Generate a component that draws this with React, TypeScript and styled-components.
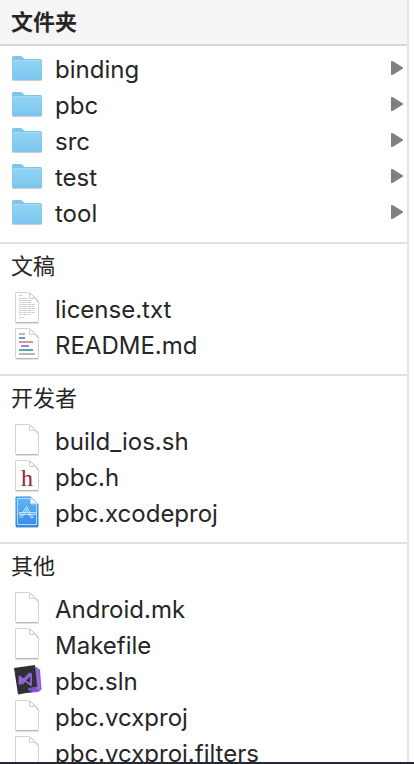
import React from 'react';
import styled, { createGlobalStyle } from 'styled-components';

const GlobalStyle = createGlobalStyle`
  * { box-sizing: border-box; }
  body {
    margin: 0;
    background: #fff;
    color: #262626;
    font-family: Inter, "Noto Sans CJK SC", sans-serif;
  }
`;

const Finder = styled.main`
  display: flex;
  height: 100vh;
  overflow: hidden;
  background: #fff;
  border-bottom: 2px solid #26282f;
`;

const Column = styled.div`
  flex: 1;
  min-width: 0;
  overflow: hidden;
`;

const Divider = styled.div`
  width: 2px;
  background: #e4e4e4;
`;

const NextColumn = styled.div`
  width: 5px;
  background: #fff;
`;

const Group = styled.section`
  padding-bottom: 10px;
  & + & { border-top: 2px solid #e2e2e2; }
`;

const GroupTitle = styled.h2<{ $pinned?: boolean }>`
  margin: 0 0 ${p => (p.$pinned ? 6 : 0)}px;
  padding: 0 11px;
  height: ${p => (p.$pinned ? 46 : 48)}px;
  line-height: 44px;
  font-size: 22px;
  font-weight: ${p => (p.$pinned ? 700 : 400)};
  background: ${p => (p.$pinned ? '#f5f5f5' : 'transparent')};
  border-bottom: ${p => (p.$pinned ? '2px solid #d6d6d6' : 'none')};
`;

const List = styled.ul`
  margin: 0;
  padding: 0;
  list-style: none;
`;

const Row = styled.button`
  display: flex;
  align-items: center;
  gap: 12px;
  width: 100%;
  height: 36px;
  padding: 0 4px 0 11px;
  border: 0;
  background: transparent;
  color: inherit;
  font: inherit;
  font-size: 24px;
  line-height: 36px;
  text-align: left;
`;

const Icon = styled.svg`
  flex: none;
  width: 32px;
  height: 36px;
`;

const Name = styled.span`
  flex: 1;
  min-width: 0;
  white-space: nowrap;
`;

const Arrow = styled.svg`
  flex: none;
  width: 12px;
  height: 36px;
`;

type Kind = 'folder' | 'blank' | 'text' | 'markdown' | 'header' | 'xcode' | 'solution';

const FolderArt = () => (
  <>
    <defs>
      <linearGradient id="folder" x1="0" y1="0" x2="0" y2="1">
        <stop offset="0" stopColor="#92d4f5" />
        <stop offset="1" stopColor="#7cc6ee" />
      </linearGradient>
    </defs>
    <path d="M1.5 28.5h29" stroke="#c9cdd0" />
    <path d="M1 27V5.500q0-1.500 1.500-1.500h7q1 0 1.800.8l1.400 1.400q.8.800 1.800.800H29.500q1.500 0 1.500 1.500V27q0 1-1 1H2q-1 0-1-1z" fill="#7fc4ea" />
    <path d="M1.500 9H30.500V26.500q0 .5-.5.500H2q-.5 0-.5-.5z" fill="url(#folder)" />
    <path d="M1.500 8.500h29" stroke="#a4dcf8" />
  </>
);

const Sheet = () => (
  <>
    <path d="M4.500 31.500h23" stroke="#e2e2e2" />
    <path d="M4.500 .5h12q2 0 3.500 1.200l5.800 5.300q1.700 1.800 1.700 4V29.500q0 1-1 1h-21q-1 0-1-1z" fill="#fff" stroke="#d2d2d2" />
    <path d="M5 30.500h22" stroke="#b5b5b5" />
    <path d="M18.500 1v5.500h5.500l3 3.500q-.4-1.800-1.800-3z" fill="#fff" stroke="#d0d0d0" strokeLinejoin="round" />
  </>
);

const TextArt = () => (
  <>
    <Sheet />
    <path
      d="M8 3.500h4M8 6.500h8M8 8.500h13M8 10.500h12M8 12.500h16M8 14.500h15M8 16.500h16M8 18.500h14M8 20.500h16M8 22.500h11M8 25.500h5"
      stroke="#d0d0d0"
      strokeDasharray="3 .5 5 .5"
    />
  </>
);

const MarkdownArt = () => (
  <>
    <Sheet />
    <g strokeWidth="2">
      <path d="M8 6h6M8 26h16" stroke="#b9b9bb" />
      <path d="M8 10h6M8 22h14" stroke="#5aa5b5" />
      <path d="M8 14h14" stroke="#d5959c" />
      <path d="M10 18h8" stroke="#9b80f6" />
    </g>
  </>
);

const HeaderArt = () => (
  <>
    <Sheet />
    <text x="16" y="26" textAnchor="middle" fontFamily="'Liberation Serif', serif" fontSize="24" fill="#9d2235">h</text>
  </>
);

const XcodeArt = () => (
  <>
    <defs>
      <linearGradient id="xcode" x1="0" y1="0" x2="0" y2="1">
        <stop offset="0" stopColor="#60b8f4" />
        <stop offset="1" stopColor="#368ae9" />
      </linearGradient>
    </defs>
    <path d="M5 31.500h22" stroke="#b8c4d2" />
    <path d="M5 1h15l7 7V30.500H5z" fill="url(#xcode)" stroke="#3487dc" />
    <path d="M20 2.500H6.500V28.500H25.500V9" fill="none" stroke="#b5dcfb" />
    <path d="M19.500 1v6q0 1 1 1h6.500z" fill="#eff8ff" stroke="#9fcdf2" />
    <g fill="none" stroke="#c4e4fd" strokeLinecap="round">
      <path d="M15.500 10.500L9 21.500M17 11.500L11 21.500M15.500 10.500L22 21.500M14.500 12.500L20 21.500M8.500 16.500H24M8.500 18.500H24M8.500 16.500v2M24 16.500v2" />
      <path d="M20 21.500q2 1 2 0" />
    </g>
  </>
);

const SolutionArt = () => (
  <>
    <path d="M19 4.500l7-1.500 1.500 2 1.500.5 1.500 20-3 2.500L15 29z" fill="#8961d4" />
    <path d="M26 4l2.500 20-9 2" fill="none" stroke="#a67ae9" />
    <path d="M3 4L24 1l2 21.500-7 1.500 2 4L7 30.500z" fill="#303033" />
    <path d="M17 24l9-.5.500 3-9 .5z" fill="#7950c5" />
    <path d="M8.500 13l3 6.500L20 10v11L8.500 12.500v7.500L19 9" fill="none" stroke="#9067d6" strokeWidth="1.800" strokeLinejoin="round" />
  </>
);

const art: Record<Kind, React.FC> = {
  folder: FolderArt,
  blank: Sheet,
  text: TextArt,
  markdown: MarkdownArt,
  header: HeaderArt,
  xcode: XcodeArt,
  solution: SolutionArt,
};

const groups: { title: string; items: [string, Kind][] }[] = [
  {
    title: '文件夹',
    items: [['binding', 'folder'], ['pbc', 'folder'], ['src', 'folder'], ['test', 'folder'], ['tool', 'folder']],
  },
  { title: '文稿', items: [['license.txt', 'text'], ['README.md', 'markdown']] },
  { title: '开发者', items: [['build_ios.sh', 'blank'], ['pbc.h', 'header'], ['pbc.xcodeproj', 'xcode']] },
  {
    title: '其他',
    items: [
      ['Android.mk', 'blank'],
      ['Makefile', 'blank'],
      ['pbc.sln', 'solution'],
      ['pbc.vcxproj', 'blank'],
      ['pbc.vcxproj.filters', 'blank'],
    ],
  },
];

const Item = ({ name, kind }: { name: string; kind: Kind }) => {
  const Art = art[kind];
  return (
    <li>
      <Row type="button">
        <Icon viewBox="0 0 32 36" aria-hidden="true"><Art /></Icon>
        <Name>{name}</Name>
        {kind === 'folder' && (
          <Arrow viewBox="0 0 12 36" aria-hidden="true">
            <path d="M0 9.500q0-.5.500-.5h1L12 15.500v1L1.500 23h-1q-.5 0-.5-.5z" fill="#808080" />
          </Arrow>
        )}
      </Row>
    </li>
  );
};

export default function App() {
  return (
    <>
      <GlobalStyle />
      <Finder lang="zh-CN">
        <Column>
          {groups.map((group, i) => (
            <Group key={group.title}>
              <GroupTitle $pinned={i === 0}>{group.title}</GroupTitle>
              <List>
                {group.items.map(([name, kind]) => <Item key={name} name={name} kind={kind} />)}
              </List>
            </Group>
          ))}
        </Column>
        <Divider />
        <NextColumn />
      </Finder>
    </>
  );
}
